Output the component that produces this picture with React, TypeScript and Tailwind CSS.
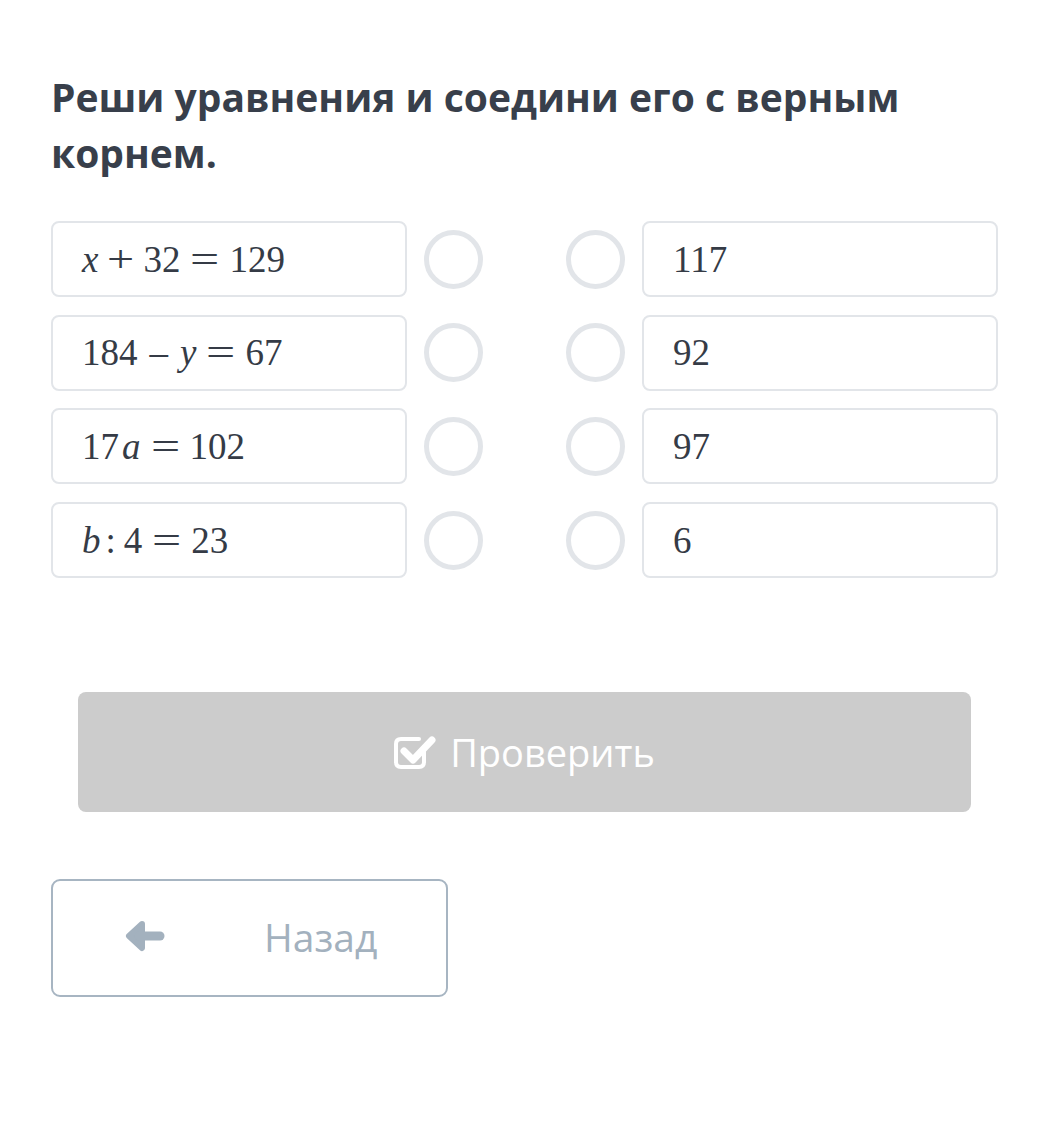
import React from 'react';

const serif = "font-['Liberation_Serif','DejaVu_Serif',serif]";

// operators are stretched a bit so they look like the math font of the source
const Rel = ({ c }: { c: string }) => (
    <span className="inline-block w-[29px] mx-[10px] text-center scale-x-[1.4]">{c}</span>
);
const Bin = ({ c }: { c: string }) => (
    <span className="inline-block w-[29px] mx-[8px] text-center scale-x-[1.3]">{c}</span>
);

const rows: { left: React.ReactNode; right: string }[] = [
    {
        left: (
            <>
                <i>x</i>
                <Bin c="+" />
                32
                <Rel c="=" />
                129
            </>
        ),
        right: '117',
    },
    {
        left: (
            <>
                184
                <span className="mx-[12px]">–</span>
                <i>y</i>
                <Rel c="=" />
                67
            </>
        ),
        right: '92',
    },
    {
        left: (
            <>
                17<i className="ml-[3px]">a</i>
                <Rel c="=" />
                102
            </>
        ),
        right: '97',
    },
    {
        left: (
            <>
                <i>b</i>
                <span className="ml-[5px] mr-[8px]">:</span>4
                <Rel c="=" />
                23
            </>
        ),
        right: '6',
    },
];

const Card = ({ children }: { children: React.ReactNode }) => (
    <div
        className={`w-[356px] h-[76px] shrink-0 flex items-center px-[29px] border-2 border-[#e2e5e9] rounded-[8px] bg-white text-[37px] text-[#353b46] ${serif}`}
    >
        <span className="leading-none whitespace-nowrap">{children}</span>
    </div>
);

const Dot = () => <div className="w-[59px] h-[59px] rounded-full border-[5px] border-[#e2e5e9] shrink-0" />;

// check-square-o, the tick runs out of the box
const CheckIcon = () => (
    <svg width="42" height="34" viewBox="0 0 42 34" fill="none">
        <path
            d="M30 12 V27 Q30 32 25 32 H7 Q2 32 2 27 V9 Q2 4 7 4 H25"
            stroke="white"
            strokeWidth="4"
            strokeLinecap="round"
        />
        <path d="M10 16 L19 25 L38 5" stroke="white" strokeWidth="7" strokeLinecap="round" strokeLinejoin="round" />
    </svg>
);

const ArrowIcon = () => (
    <svg width="40" height="32" viewBox="0 0 40 32">
        <path d="M17 4 L4 16 L17 28 Z" fill="#a3b1be" stroke="#a3b1be" strokeWidth="6" strokeLinejoin="round" />
        <path d="M14 16 H35" stroke="#a3b1be" strokeWidth="9" strokeLinecap="round" />
    </svg>
);

export default function App() {
    return (
        <div className="w-[1049px] min-h-[1125px] bg-white pl-[51px] pt-[69px] font-['Open_Sans',sans-serif]">
            <h1 className="w-[960px] text-[39px] leading-[56px] font-bold text-[#383f4b]">
                Реши уравнения и соедини его с верным корнем.
            </h1>

            <div className="mt-[40px] flex flex-col gap-[17.7px] w-[947px]">
                {rows.map((r, i) => (
                    <div key={i} className="flex items-center">
                        <Card>{r.left}</Card>
                        <div className="ml-[17px]">
                            <Dot />
                        </div>
                        <div className="ml-[83px]">
                            <Dot />
                        </div>
                        <div className="ml-[17px]">
                            <Card>{r.right}</Card>
                        </div>
                    </div>
                ))}
            </div>

            <div className="mt-[114px] ml-[27px] w-[893px] h-[120px] rounded-[8px] bg-[#cccccc] flex items-center justify-center gap-[14px] text-white">
                <CheckIcon />
                <span className="text-[38px] leading-none">Проверить</span>
            </div>

            <div className="mt-[67px] w-[397px] h-[118px] rounded-[9px] border-2 border-[#a7b5c2] flex items-center text-[#a3b1be]">
                <div className="ml-[72px] -mt-[4px]">
                    <ArrowIcon />
                </div>
                <span className="ml-[99px] -mt-[4px] text-[39px] leading-none">Назад</span>
            </div>
        </div>
    );
}
